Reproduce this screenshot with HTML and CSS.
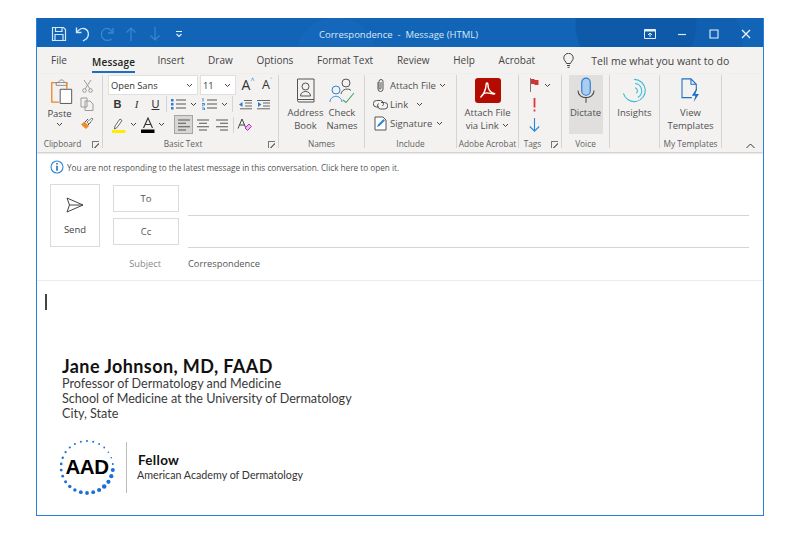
FILE: index.html
```html
<!DOCTYPE html>
<html lang="en">
<head>
<meta charset="utf-8">
<title>Correspondence - Message (HTML)</title>
<link rel="stylesheet" href="styles.css">
</head>
<body>
<div class="window">
  <header class="titlebar">
    <div class="qat">
      <span class="qbtn"><svg width="16" height="16" viewBox="0 0 16 16" fill="none" stroke="#d7e8fa" stroke-width="1.2"><path d="M1.5 1.5h11l2 2v11h-13z"/><path d="M4.5 1.5v4h6.5v-4M4 14.5v-6h8v6"/></svg></span>
      <span class="qbtn"><svg width="16" height="16" viewBox="0 0 16 16" fill="none" stroke="#d7e8fa" stroke-width="1.4"><path d="M1.5 1.5v5h5"/><path d="M2 6.2C4 3 7.5 1.6 10.5 3c3.500 1.700 3.800 6.500 1.300 9.500L8 15"/></svg></span>
      <span class="qbtn"><svg width="16" height="16" viewBox="0 0 16 16" fill="none" stroke="#3c87cf" stroke-width="1.3"><path d="M14 2v5h-5"/><path d="M13.500 6.500C12 3 8.500 1.500 5.500 3 2 4.800 1.500 9.500 3.800 12.300 6 15 10 15 12.500 13"/></svg></span>
      <span class="qbtn"><svg width="12" height="16" viewBox="0 0 12 16" fill="none" stroke="#3c87cf" stroke-width="1.2"><path d="M6 15V2M1.500 6.500 6 2l4.500 4.500"/></svg></span>
      <span class="qbtn"><svg width="12" height="16" viewBox="0 0 12 16" fill="none" stroke="#3c87cf" stroke-width="1.2"><path d="M6 1v13M1.500 9.500 6 14l4.500-4.500"/></svg></span>
      <span class="qbtn"><svg width="8" height="8" viewBox="0 0 8 8" fill="none" stroke="#e3f0fc" stroke-width="1.100"><path d="M1 1.500h6M1.500 4 4 6.500 6.500 4"/></svg></span>
    </div>
    <div class="title">Correspondence &nbsp;-&nbsp; Message (HTML)</div>
    <div class="controls">
      <span class="cbtn"><svg width="12" height="10" viewBox="0 0 12 10"><path d="M.5.5h11v9H.5z" fill="none" stroke="#e3f0fc"/><path d="M.5.500h11v2H.5z" fill="#e3f0fc"/><path d="M6 8V4.500M4 6l2-2 2 2" fill="none" stroke="#e3f0fc"/></svg></span>
      <span class="cbtn"><svg width="10" height="10" viewBox="0 0 10 10"><path d="M1 5.500h8" stroke="#e3f0fc" stroke-width="1.100"/></svg></span>
      <span class="cbtn"><svg width="10" height="10" viewBox="0 0 10 10"><path d="M1 1h8v8H1z" fill="none" stroke="#e3f0fc" stroke-width="1.100"/></svg></span>
      <span class="cbtn"><svg width="10" height="10" viewBox="0 0 10 10"><path d="M1 1l8 8M9 1 1 9" stroke="#f1f7fd" stroke-width="1.200"/></svg></span>
    </div>
  </header>

  <nav class="tabs">
    <span class="tab">File</span>
    <span class="tab active">Message</span>
    <span class="tab">Insert</span>
    <span class="tab">Draw</span>
    <span class="tab">Options</span>
    <span class="tab">Format Text</span>
    <span class="tab">Review</span>
    <span class="tab">Help</span>
    <span class="tab">Acrobat</span>
    <span class="tell">
      <svg width="11" height="15" viewBox="0 0 11 15" fill="none" stroke="#444" stroke-width="1"><path d="M3.500 10.500C3 8.500 .8 7.500.8 5a4.700 4.700 0 0 1 9.400 0c0 2.500-2.200 3.500-2.700 5.500zM4 12.500h3M4.500 14.300h2"/></svg>
      <span>Tell me what you want to do</span>
    </span>
  </nav>

  <section class="ribbon">
    <div class="group g-clip">
      <div class="gbody clip-body">
        <div class="paste">
          <svg class="paste-icon" width="23" height="27" viewBox="0 0 26 30" fill="none"><path d="M10 5H2v22h8" stroke="#e8872e" stroke-width="1.500"/><path d="M7 5h12v3H7zM10 5c0-4 6-4 6 0" stroke="#777" fill="#fff"/><path d="M18 5h1v7" stroke="#e8872e" stroke-width="1.500"/><path d="M11.500 12.500h13v16h-13z" fill="#fff" stroke="#555" stroke-width="1.100"/></svg>
          <span>Paste</span>
          <svg class="chev" width="7" height="5" viewBox="0 0 7 5" fill="none" stroke="#444"><path d="M1 1l2.500 2.500L6 1"/></svg>
        </div>
        <div class="clip-tools">
          <svg width="11" height="14" viewBox="0 0 11 14" fill="none" stroke="#9a9a9a"><path d="M2 1l6 9M9 1 3 10"/><circle cx="2.500" cy="11.500" r="1.800"/><circle cx="8.500" cy="11.500" r="1.800"/></svg>
          <svg width="14" height="14" viewBox="0 0 14 14" fill="none" stroke="#9a9a9a"><path d="M1 1h6v9H1zM5 4h5l3 3v6.500H5z" fill="#f3f2f1"/></svg>
          <svg class="brush" width="14" height="14" viewBox="0 0 14 14" fill="none"><path d="M1 7.500 6 12l3-3-4.500-4.500z" fill="#ef8b2c"/><path d="M5 5l3-3M8 8l3-3" stroke="#555"/><path d="M7 5l5-4 1 1-4 5z" fill="#fff" stroke="#555" stroke-width=".7"/></svg>
        </div>
      </div>
      <div class="glabel launch">Clipboard<span class="launcher"></span></div>
    </div>

    <div class="group g-basic">
      <div class="gbody basic-body">
        <div class="brow row1">
          <span class="combo font"><span>Open Sans</span><svg width="7" height="5" viewBox="0 0 7 5" fill="none" stroke="#444"><path d="M1 1l2.500 2.500L6 1"/></svg></span>
          <span class="combo size"><span>11</span><svg width="7" height="5" viewBox="0 0 7 5" fill="none" stroke="#444"><path d="M1 1l2.500 2.500L6 1"/></svg></span>
          <span class="sizer">A<sup class="up">^</sup></span>
          <span class="sizer small">A<sup class="down">˅</sup></span>
        </div>
        <div class="brow row2">
          <span class="fmt b">B</span><span class="fmt i">I</span><span class="fmt u">U</span>
          <span class="vsep"></span>
          <span class="tool m4"><svg width="15" height="12" viewBox="0 0 15 12"><path d="M0 1h2.500v2.500H0zM0 5h2.500v2.500H0zM0 9h2.500v2.500H0z" fill="#2b7cd3"/><path d="M5 2h10M5 6h10M5 10h10" stroke="#555" stroke-width="1.100"/></svg></span>
          <svg class="chev m3" width="7" height="5" viewBox="0 0 7 5" fill="none" stroke="#444"><path d="M1 1l2.500 2.500L6 1"/></svg>
          <span class="tool m5"><svg width="15" height="12" viewBox="0 0 15 12"><path d="M1 0v3.500M0 5.500h2.500v1.500H0v1.500M0 10h2.500v2H0" fill="none" stroke="#2b7cd3" stroke-width=".9"/><path d="M5 2h10M5 6h10M5 10h10" stroke="#555" stroke-width="1.100"/></svg></span>
          <svg class="chev m4" width="7" height="5" viewBox="0 0 7 5" fill="none" stroke="#444"><path d="M1 1l2.500 2.500L6 1"/></svg>
          <span class="vsep m4"></span>
          <span class="tool m6"><svg width="13" height="11" viewBox="0 0 13 11"><path d="M0 5.500 3.500 3v5z" fill="#2b7cd3"/><path d="M5 1.500h8M6 4h7M6 7h7M1 9.800h12" stroke="#666"/></svg></span>
          <span class="tool m5"><svg width="13" height="11" viewBox="0 0 13 11"><path d="M4.500 5.500 1 3v5z" fill="#2b7cd3"/><path d="M0 1.500h13M6 4h7M6 7h7M0 9.800h13" stroke="#666"/></svg></span>
        </div>
        <div class="brow row3">
          <span class="tool m3"><svg width="14" height="16" viewBox="0 0 14 16"><path d="M3 9l5-7 2 1.500-5 7L2.500 12z" fill="#fff" stroke="#555" stroke-width=".9"/><path d="M0 13h13.500v3H0z" fill="#ffec00"/></svg></span>
          <svg class="chev m4" width="7" height="5" viewBox="0 0 7 5" fill="none" stroke="#444"><path d="M1 1l2.500 2.500L6 1"/></svg>
          <span class="tool m4"><svg width="14" height="16" viewBox="0 0 14 16"><path d="M2.500 11 7 1l4.500 10M4.200 7.500h5.600" fill="none" stroke="#333" stroke-width="1.100"/><path d="M0 12.500h13.500V16H0z" fill="#000"/></svg></span>
          <svg class="chev m3" width="7" height="5" viewBox="0 0 7 5" fill="none" stroke="#444"><path d="M1 1l2.500 2.500L6 1"/></svg>
          <span class="align on"><svg width="12" height="12" viewBox="0 0 12 12" stroke="#555" stroke-width="1.100"><path d="M0 1h12M0 4.300h8M0 7.700h12M0 11h8"/></svg></span>
          <span class="align"><svg width="12" height="12" viewBox="0 0 12 12" stroke="#555" stroke-width="1.100"><path d="M0 1h12M2 4.300h8M0 7.700h12M2 11h8"/></svg></span>
          <span class="align"><svg width="12" height="12" viewBox="0 0 12 12" stroke="#555" stroke-width="1.100"><path d="M0 1h12M4 4.300h8M0 7.700h12M4 11h8"/></svg></span>
          <span class="vsep"></span>
          <span class="tool m3"><svg width="15" height="14" viewBox="0 0 15 14"><path d="M1 10.500 5 1l4 9.500M2.500 7h5" fill="none" stroke="#444"/><path d="M8 10l4-4 2.500 2.500-4 4z" fill="#e9b8ee" stroke="#b13fbd"/></svg></span>
        </div>
      </div>
      <div class="glabel launch">Basic Text<span class="launcher"></span></div>
    </div>

    <div class="group g-names">
      <div class="gbody two-big">
        <div class="big">
          <svg width="19" height="25" viewBox="0 0 19 25" fill="none" stroke="#555"><path d="M1.500 1h16.500v23H3a1.500 1.500 0 0 1-1.500-1.500z"/><path d="M1.500 21.500H18"/><circle cx="9.500" cy="8.500" r="3.500"/><path d="M4.500 18c0-6 10-6 10 0z"/></svg>
          <span>Address<br>Book</span>
        </div>
        <div class="big">
          <svg width="26" height="25" viewBox="0 0 26 25" fill="none"><circle cx="17" cy="5" r="4" stroke="#555"/><path d="M12 16c1-5.500 8-6 10-3.500" stroke="#555"/><circle cx="7" cy="12" r="4" stroke="#2b88d8"/><path d="M1 24c0-7 11-8 12 0" stroke="#2b88d8"/><path d="M14 22l3 2.500L25 15" stroke="#4aa564" stroke-width="1.100"/></svg>
          <span>Check<br>Names</span>
        </div>
      </div>
      <div class="glabel">Names</div>
    </div>

    <div class="group g-incl">
      <div class="gbody incl-body">
        <div class="irow"><span class="ic"><svg width="11" height="15" viewBox="0 0 11 15" fill="none" stroke="#555"><path d="M3 4v7a2.500 2.500 0 0 0 5 0V3.500a2 2 0 0 0-4 0V10a1 1 0 0 0 2 0V4"/></svg></span><span class="itext">Attach File</span><svg class="chev m3" width="7" height="5" viewBox="0 0 7 5" fill="none" stroke="#444"><path d="M1 1l2.500 2.500L6 1"/></svg></div>
        <div class="irow"><span class="ic"><svg width="15" height="11" viewBox="0 0 15 11" fill="none" stroke="#555"><path d="M6 8H3.500a3.200 3.200 0 0 1 0-6.500h4A3.200 3.200 0 0 1 9.500 7"/><path d="M8 3.500h3.500a3.200 3.200 0 0 1 0 6.500h-4A3.200 3.200 0 0 1 5.500 4.500"/></svg></span><span class="itext">Link</span><svg class="chev m8" width="7" height="5" viewBox="0 0 7 5" fill="none" stroke="#444"><path d="M1 1l2.500 2.500L6 1"/></svg></div>
        <div class="irow"><span class="ic"><svg width="13" height="15" viewBox="0 0 13 15" fill="none"><path d="M1 1h8l3 3v10H1z" fill="#fff" stroke="#555"/><path d="M3 11l1-2.500L9.500 3 11 4.500 5.500 10z" fill="#2b88d8"/></svg></span><span class="itext">Signature</span><svg class="chev m3" width="7" height="5" viewBox="0 0 7 5" fill="none" stroke="#444"><path d="M1 1l2.500 2.500L6 1"/></svg></div>
      </div>
      <div class="glabel">Include</div>
    </div>

    <div class="group g-adobe">
      <div class="gbody one-big">
        <div class="big">
          <span class="pdf"><svg width="17" height="17" viewBox="0 0 18 18" fill="none" stroke="#fff" stroke-width="1.500"><path d="M1.500 16c2.500-1 6-8 6-13 0-2.500 2-2.500 2 0 0 6 3 8.500 7 9.500-.2 1-5-1-8-1-3 0-5.500 2-6.500 4.500z"/></svg></span>
          <span>Attach File<br>via Link <svg class="chev inl" width="7" height="5" viewBox="0 0 7 5" fill="none" stroke="#444"><path d="M1 1l2.500 2.500L6 1"/></svg></span>
        </div>
      </div>
      <div class="glabel">Adobe Acrobat</div>
    </div>

    <div class="group g-tags">
      <div class="gbody tags-body">
        <div class="trow"><svg width="11" height="14" viewBox="0 0 11 14"><path d="M1.500 0v14" stroke="#777"/><path d="M2 1h3.500v1H9.500v5H5.500V6H2z" fill="#d13438"/></svg><svg class="chev" width="7" height="5" viewBox="0 0 7 5" fill="none" stroke="#444"><path d="M1 1l2.500 2.500L6 1"/></svg></div>
        <div class="trow"><svg width="11" height="14" viewBox="0 0 11 14"><path d="M4.600 0h1.800v9.500H4.600zM4.600 11.500h1.800v2H4.600z" fill="#e3343a"/></svg></div>
        <div class="trow"><svg width="11" height="14" viewBox="0 0 11 14" fill="none" stroke="#2b88d8" stroke-width="1.100"><path d="M5.500 0v13M.8 8.500l4.700 4.700 4.700-4.700"/></svg></div>
      </div>
      <div class="glabel launch">Tags<span class="launcher"></span></div>
    </div>

    <div class="group g-voice">
      <div class="gbody one-big">
        <div class="big dictate">
          <svg width="18" height="26" viewBox="0 0 19 27" fill="none"><rect x="5" y="1" width="9" height="18" rx="4.500" fill="#a9cdf0" stroke="#2b7cd3" stroke-width="1.200"/><path d="M1 14c0 10 17 10 17 0" stroke="#444" stroke-width="1.100"/><path d="M9.500 21v6" stroke="#444" stroke-width="1.100"/></svg>
          <span>Dictate</span>
        </div>
      </div>
      <div class="glabel">Voice</div>
    </div>

    <div class="group g-ins">
      <div class="gbody one-big">
        <div class="big">
          <svg width="26" height="25" viewBox="0 0 28 27" fill="none" stroke="#3bbcd4" stroke-width="1.200"><path d="M13 1.500a12 12 0 1 1-11.500 15"/><path d="M14 6a8 8 0 0 1 3 15"/><path d="M14 10.500a3.500 3.500 0 0 1 1.500 6"/></svg>
          <span>Insights</span>
        </div>
      </div>
      <div class="glabel"></div>
    </div>

    <div class="group g-tmpl">
      <div class="gbody one-big">
        <div class="big">
          <svg width="19" height="25" viewBox="0 0 21 28" fill="none"><path d="M12 22H1V1h10l6 6v7M11 1v6h6" stroke="#1f6fc4" stroke-width="1.200"/><path d="M17 12l-5 8h4l-2 7 6-9h-4l2-6z" fill="#1f6fc4"/></svg>
          <span>View<br>Templates</span>
        </div>
      </div>
      <div class="glabel">My Templates</div>
    </div>

    <div class="collapse"><svg width="9" height="6" viewBox="0 0 9 6" fill="none" stroke="#333"><path d="M.5 5 4.500 1l4 4"/></svg></div>
  </section>

  <div class="notice">
    <svg width="14" height="14" viewBox="0 0 14 14" fill="none"><circle cx="7" cy="7" r="6" stroke="#2b88d8" stroke-width="1.100"/><path d="M6.200 3h1.600v1.600H6.200zM6.200 5.800h1.600v5H6.200z" fill="#2b6cb0"/></svg>
    <span>You are not responding to the latest message in this conversation. Click here to open it.</span>
  </div>

  <section class="compose">
    <div class="send">
      <svg width="18" height="16" viewBox="0 0 18 16" fill="none" stroke="#444" stroke-width="1"><path d="M1 1l16 7-16 7 2.500-7zM3.500 8H17"/></svg>
      <span>Send</span>
    </div>
    <div class="addr">
      <div class="addr-row"><span class="addr-btn">To</span><span class="addr-field"></span></div>
      <div class="addr-row"><span class="addr-btn">Cc</span><span class="addr-field"></span></div>
    </div>
  </section>
  <div class="subject"><span class="subj-label">Subject</span><span class="subj-value">Correspondence</span></div>

  <main class="body">
    <div class="caret"></div>
    <div class="sig">
      <div class="sig-name">Jane Johnson, MD, FAAD</div>
      <div class="sig-line">Professor of Dermatology and Medicine</div>
      <div class="sig-line">School of Medicine at the University of Dermatology</div>
      <div class="sig-line">City, State</div>
    </div>
    <div class="badge">
      <div class="logo">
        <svg width="60" height="60" viewBox="0 0 60 60" fill="#1a6fd8">
          <circle cx="30" cy="4" r="1"/><circle cx="36.200" cy="4.800" r="1"/><circle cx="42.100" cy="7" r=".9"/><circle cx="47.200" cy="10.500" r=".9"/><circle cx="51.400" cy="15.200" r=".8"/><circle cx="54.300" cy="20.800" r=".8"/><circle cx="55.800" cy="26.900" r="1"/><circle cx="55.800" cy="33.100" r="2"/><circle cx="54.300" cy="39.200" r="2.100"/><circle cx="51.400" cy="44.800" r="2.100"/><circle cx="47.200" cy="49.500" r="2.300"/><circle cx="42.100" cy="53" r="2.100"/><circle cx="36.200" cy="55.200" r="1.900"/><circle cx="30" cy="56" r="1.900"/><circle cx="23.800" cy="55.200" r="1.900"/><circle cx="17.900" cy="53" r="1.700"/><circle cx="12.800" cy="49.500" r="1.700"/><circle cx="8.600" cy="44.800" r="1.500"/><circle cx="5.700" cy="39.200" r="1.400"/><circle cx="4.200" cy="33.100" r="1.400"/><circle cx="4.200" cy="26.900" r="1.300"/><circle cx="5.700" cy="20.800" r="1.200"/><circle cx="8.600" cy="15.200" r="1.100"/><circle cx="12.800" cy="10.500" r="1.100"/><circle cx="17.900" cy="7" r="1"/><circle cx="23.800" cy="4.800" r="1"/>
        </svg>
        <span class="logo-text">AAD</span>
      </div>
      <div class="badge-text">
        <div class="fellow">Fellow</div>
        <div class="aad">American Academy of Dermatology</div>
      </div>
    </div>
  </main>
</div>
</body>
</html>
```

FILE: styles.css
```css
* { box-sizing: border-box; }
html, body { margin: 0; background: #fff; }
body { padding: 18px 36px 0; font-family: "Open Sans", "Noto Sans", sans-serif; color: #444; }
svg { display: block; flex: none; }

.m3 { margin-left: 3.5px; } .m4 { margin-left: 4px; } .m5 { margin-left: 5px; } .m6 { margin-left: 6px; } .m8 { margin-left: 8px; }

.window { width: 728px; height: 498px; border: solid #2a80d8; border-width: 0 1.5px 1.5px; background: #fff; display: flex; flex-direction: column; overflow: hidden; }

/* title bar */
.titlebar { height: 29px; flex: none; display: grid; grid-template-columns: 1fr auto 1fr; align-items: center; padding: 3px 0 0 11px; margin: 0 -1px;
  background:
    radial-gradient(circle at 600px 5px, #0e5aa9 0 60px, transparent 61px),
    radial-gradient(circle at 672px 22px, #115fb0 0 34px, transparent 35px),
    radial-gradient(circle at 300px 40px, #1467ba 0 40px, transparent 41px),
    #1164b6; }
.qat { display: flex; align-items: center; }
.qbtn { width: 24px; height: 24px; display: flex; align-items: center; justify-content: center; }
.title { color: #d9e9f9; font-size: 9.500px; white-space: nowrap; padding-right: 14px; }
.controls { display: flex; justify-content: flex-end; padding-right: 2px; }
.cbtn { width: 32px; height: 24px; display: flex; align-items: center; justify-content: center; }

/* tabs */
.tabs { height: 27px; flex: none; display: flex; align-items: center; background: #f3f2f1; padding: 0 0 0 14px; gap: 23.700px; font-size: 10px; color: #444; }
.tab { height: 27px; line-height: 26px; white-space: nowrap; }
.tab.active { color: #222; font-weight: 600; letter-spacing: .2px; box-shadow: inset 0 -2px 0 #1b6ec2; height: 24px; line-height: 26px; margin: 0 -1.500px 0 1.500px; }
.tell { display: flex; align-items: center; gap: 17px; margin-left: 4.500px; white-space: nowrap; font-size: 10.500px; }

/* ribbon */
.ribbon { height: 78px; flex: none; display: flex; background: #f3f2f1; box-shadow: 0 1px 2px rgba(0,0,0,.25); padding-left: 1px; position: relative; }
.group { display: flex; flex-direction: column; flex: none; margin: 1px 0 4px; border-right: 1px solid #d6d4d2; }
.gbody { height: 62px; flex: none; }
.glabel { height: 11px; flex: none; font-size: 8.300px; line-height: 14px; color: #605e5c; text-align: center; white-space: nowrap; position: relative; }
.launch { padding-right: 15px; }
.launcher { position: absolute; right: 3px; top: 4px; width: 7px; height: 7px; border: 1px solid #777; border-width: 1px 0 0 1px; background: linear-gradient(135deg, transparent 55%, #777 55% 70%, transparent 70%); }
.g-clip { width: 65px; } .g-basic { width: 176px; } .g-names { width: 86px; } .g-incl { width: 92px; } .g-adobe { width: 62px; } .g-tags { width: 43px; } .g-voice { width: 48px; } .g-ins { width: 50px; } .g-tmpl { width: 62px; }

.chev { display: block; flex: none; }
.chev.inl { display: inline-block; vertical-align: 1px; margin-left: 1px; }

.clip-body { display: flex; padding-top: 3px; }
.paste { width: 43px; display: flex; flex-direction: column; align-items: center; font-size: 9.500px; line-height: 13px; color: #444; gap: 2px; }
.paste-icon { margin-left: 3px; }
.clip-tools { display: flex; flex-direction: column; gap: 4px; align-items: center; padding: 1px 0 0; width: 12px; }
.brush { margin-top: 2px; }

.basic-body { display: flex; flex-direction: column; padding: 0 0 0 5px; }
.brow { display: flex; align-items: center; }
.brow > * { flex: none; }
.row1 { height: 20px; }
.row2 { height: 18px; }
.row3 { height: 19px; margin-top: 2px; }
.combo { height: 20px; background: #fff; border: 1px solid #e1dfdd; display: flex; align-items: center; justify-content: space-between; padding: 0 4px 0 2px; font-size: 9.300px; color: #333; margin-right: 2px; }
.combo.font { width: 90px; } .combo.size { width: 36px; }
.sizer { width: 20px; text-align: center; font-size: 14px; color: #333; line-height: 16px; display: flex; justify-content: center; }
.sizer.small { font-size: 12.500px; margin-left: -1px; }
.sizer sup { font-size: 7px; line-height: 8px; color: #2b88d8; }
.fmt { width: 19px; text-align: center; font-size: 11px; color: #333; font-family: "Liberation Sans", sans-serif; }
.fmt.b { font-weight: 700; } .fmt.i { font-style: italic; font-family: "Liberation Serif", serif; } .fmt.u { text-decoration: underline; }
.vsep { width: 1px; height: 16px; background: #d6d4d2; }
.row2 .vsep:not(.m4) { margin-left: 1px; }
.row3 .vsep { margin-left: 1.500px; }
.tool { display: flex; align-items: center; justify-content: center; }
.align { width: 19px; height: 19px; display: flex; align-items: center; justify-content: center; }
.align.on { background: #d8d6d4; border: 1px solid #a7a5a3; margin-left: 9px; }

.two-big { display: flex; justify-content: center; gap: 3px; padding: 3px 0 0 2px; }
.one-big { display: flex; justify-content: center; padding-top: 3px; }
.big { display: flex; flex-direction: column; align-items: center; font-size: 9.500px; line-height: 13px; color: #505050; text-align: center; gap: 3px; white-space: nowrap; }
.dictate { width: 34px; background: #e1dfdd; height: 59px; padding-top: 2px; margin-top: -3px; gap: 2.500px; }

.incl-body { display: flex; flex-direction: column; padding: .5px 0 0 8px; }
.irow { height: 19px; display: flex; align-items: center; font-size: 9.500px; color: #505050; white-space: nowrap; }
.ic { width: 15px; display: flex; justify-content: center; flex: none; }
.itext { margin-left: 2px; }

.pdf { width: 26px; height: 25px; border-radius: 3px; background: #b30b00; display: flex; align-items: center; justify-content: center; }

.tags-body { display: flex; flex-direction: column; padding: 0 0 0 10px; }
.trow { height: 20px; display: flex; align-items: center; gap: 4px; }

.collapse { flex: 1; display: flex; justify-content: flex-end; align-items: flex-end; padding: 0 8px 3px 0; }

/* compose */
.notice { height: 32px; flex: none; display: flex; align-items: center; gap: 3px; padding: 0 0 2px 13px; font-size: 8.200px; color: #555; }
.compose { display: flex; padding-left: 13px; flex: none; }
.send { width: 50px; height: 63px; border: 1px solid #dcdbd9; display: flex; flex-direction: column; align-items: center; gap: 10px; padding-top: 12px; font-size: 9.500px; color: #444; }
.addr { flex: 1; padding: 1px 14px 0 13px; display: flex; flex-direction: column; gap: 6px; }
.addr-row { display: flex; height: 27px; gap: 9px; }
.addr-btn { width: 66px; height: 27px; border: 1px solid #dcdbd9; display: flex; align-items: center; justify-content: center; font-size: 9.500px; color: #555; }
.addr-field { flex: 1; border-bottom: 1px solid #d6d4d2; height: 31px; }
.addr-row + .addr-row .addr-field { height: 30px; }
.subject { height: 34px; flex: none; display: flex; align-items: center; border-bottom: 1px solid #eeedec; font-size: 9.300px; }
.subj-label { width: 124px; text-align: right; color: #8a8886; }
.subj-value { margin-left: 27px; color: #555; }

/* body */
.body { flex: 1; padding: 13px 0 0 8px; }
.caret { width: 1.500px; height: 16px; background: #444; }
.sig { padding: 46px 0 0 17px; font-family: Lato, "Noto Sans", sans-serif; }
.sig-name { font-size: 18px; font-weight: 700; letter-spacing: .4px; line-height: 20px; color: #111; }
.sig-line { font-size: 12.600px; line-height: 15px; color: #3a3a3a; }
.badge { display: flex; align-items: center; padding: 16px 0 0 12px; font-family: Lato, "Noto Sans", sans-serif; }
.logo { width: 60px; height: 60px; position: relative; display: flex; align-items: center; justify-content: center; }
.logo svg { position: absolute; inset: 0; }
.logo-text { font-family: "Liberation Sans", sans-serif; font-size: 20.500px; font-weight: 700; color: #000; letter-spacing: -.4px; position: relative; }
.badge-text { margin-left: 9px; border-left: 1px solid #bbb; height: 51px; display: flex; flex-direction: column; justify-content: center; padding-left: 10px; }
.fellow { font-size: 13.500px; font-weight: 700; letter-spacing: .3px; color: #111; line-height: 15px; padding-left: 1px; }
.aad { font-size: 10.700px; color: #333; line-height: 14px; }
```
